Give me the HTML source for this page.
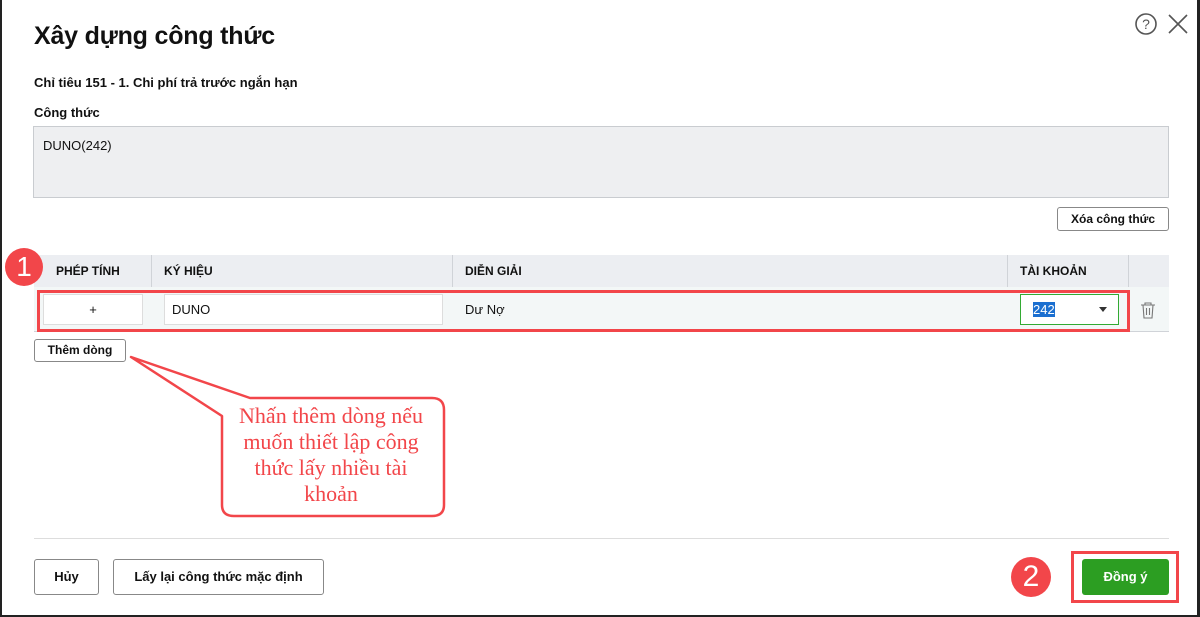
<!DOCTYPE html><html><head><style>
body{margin:0;width:1200px;height:617px;background:#fff;font-family:"Liberation Sans",sans-serif;position:relative;overflow:hidden;color:#111}
.a{position:absolute}
.btn{position:absolute;border:1px solid #888;border-radius:3px;background:#fff;font-weight:bold;font-size:13px;text-align:center;box-sizing:border-box}
.th{position:absolute;top:255px;height:32px;line-height:32px;font-weight:bold;font-size:12px;border-right:1px solid #d0d3d8;box-sizing:border-box;padding-left:12px}
</style></head><body>
<div class="a" style="left:0;top:0;width:2px;height:617px;background:#222"></div>
<div class="a" style="right:0;top:0;width:3px;height:617px;background:#222"></div>
<div class="a" style="left:0;bottom:0;width:1200px;height:2px;background:#222"></div>
<div class="a" style="left:34px;top:22px;font-size:25px;font-weight:bold;letter-spacing:-0.2px">Xây dựng công thức</div>
<svg class="a" style="left:1133px;top:12px" width="60" height="26"><circle cx="13" cy="12" r="10" fill="none" stroke="#555" stroke-width="1.6"/><text x="13" y="17" font-size="14" text-anchor="middle" fill="#555" font-family="Liberation Sans">?</text><path d="M36 3L54 21M54 3L36 21" stroke="#555" stroke-width="1.6"/></svg>
<div class="a" style="left:34px;top:75px;font-size:13px;font-weight:bold">Chỉ tiêu 151 - 1. Chi phí trả trước ngắn hạn</div>
<div class="a" style="left:34px;top:105px;font-size:13px;font-weight:bold">Công thức</div>
<div class="a" style="left:33px;top:126px;width:1136px;height:72px;background:#eeeff1;border:1px solid #c9ccd0;box-sizing:border-box;padding:11px 9px;font-size:13px">DUNO(242)</div>
<div class="btn" style="left:1057px;top:207px;width:112px;height:24px;line-height:22px;font-size:12px">Xóa công thức</div>
<div class="a" style="left:34px;top:255px;width:1135px;height:32px;background:#eceef2"></div>
<div class="a" style="left:34px;top:287px;width:1135px;height:44px;background:#f3f7f7;border-bottom:1px solid #d0d3d8"></div>
<div class="th" style="left:34px;width:118px;padding-left:22px">PHÉP TÍNH</div>
<div class="th" style="left:152px;width:301px">KÝ HIỆU</div>
<div class="th" style="left:453px;width:555px">DIỄN GIẢI</div>
<div class="th" style="left:1008px;width:121px">TÀI KHOẢN</div>
<div class="a" style="left:43px;top:294px;width:100px;height:31px;background:#fff;border:1px solid #ddd;box-sizing:border-box;text-align:center;line-height:29px;font-size:13px">+</div>
<div class="a" style="left:164px;top:294px;width:279px;height:31px;background:#fff;border:1px solid #ddd;box-sizing:border-box;padding-left:7px;line-height:29px;font-size:13px">DUNO</div>
<div class="a" style="left:465px;top:302px;font-size:13px">Dư Nợ</div>
<div class="a" style="left:1020px;top:294px;width:99px;height:31px;background:#fff;border:1px solid #3a3;box-sizing:border-box"><span class="a" style="left:12px;top:7px;background:#1b6fd0;color:#fff;font-size:13px;line-height:15px">242</span><span class="a" style="left:78px;top:12px;border:4px solid transparent;border-top:5px solid #333"></span></div>
<svg class="a" style="left:1140px;top:302px" width="16" height="17"><path d="M1 3H15M5 3V1H11V3M3 3L4 16H12L13 3M6.5 6V13M9.5 6V13" stroke="#777" fill="none" stroke-width="1.1"/></svg>
<div class="a" style="left:37px;top:290px;width:1093px;height:42px;border:3px solid #f2464a;box-sizing:border-box"></div>
<div class="a" style="left:5px;top:248px;width:38px;height:38px;border-radius:50%;background:#f2464a;color:#fff;font-size:28px;text-align:center;line-height:38px">1</div>
<div class="btn" style="left:34px;top:339px;width:92px;height:23px;line-height:21px;font-size:12px">Thêm dòng</div>
<svg class="a" style="left:0;top:0" width="1200" height="617"><path d="M131 357L250 398H432Q444 398 444 410V505Q444 516 432 516H234Q222 516 222 505V416Z" fill="#fff" stroke="#f2464a" stroke-width="2.5" stroke-linejoin="round"/></svg>
<div class="a" style="left:224px;top:403px;width:214px;text-align:center;font-family:'Liberation Serif',serif;font-size:22px;line-height:26px;color:#f2464a;white-space:nowrap">Nhấn thêm dòng nếu<br>muốn thiết lập công<br>thức lấy nhiều tài<br>khoản</div>
<div class="a" style="left:34px;top:538px;width:1135px;height:1px;background:#ddd"></div>
<div class="btn" style="left:34px;top:559px;width:65px;height:36px;line-height:34px">Hủy</div>
<div class="btn" style="left:113px;top:559px;width:211px;height:36px;line-height:34px">Lấy lại công thức mặc định</div>
<div class="a" style="left:1011px;top:557px;width:40px;height:40px;border-radius:50%;background:#f2464a;color:#fff;font-size:30px;text-align:center;line-height:40px">2</div>
<div class="a" style="left:1071px;top:551px;width:108px;height:52px;border:3px solid #f2464a;box-sizing:border-box"></div>
<div class="a" style="left:1082px;top:559px;width:87px;height:36px;background:#2c9e22;border-radius:3px;color:#fff;font-weight:bold;font-size:13px;text-align:center;line-height:36px">Đồng ý</div>
</body></html>
